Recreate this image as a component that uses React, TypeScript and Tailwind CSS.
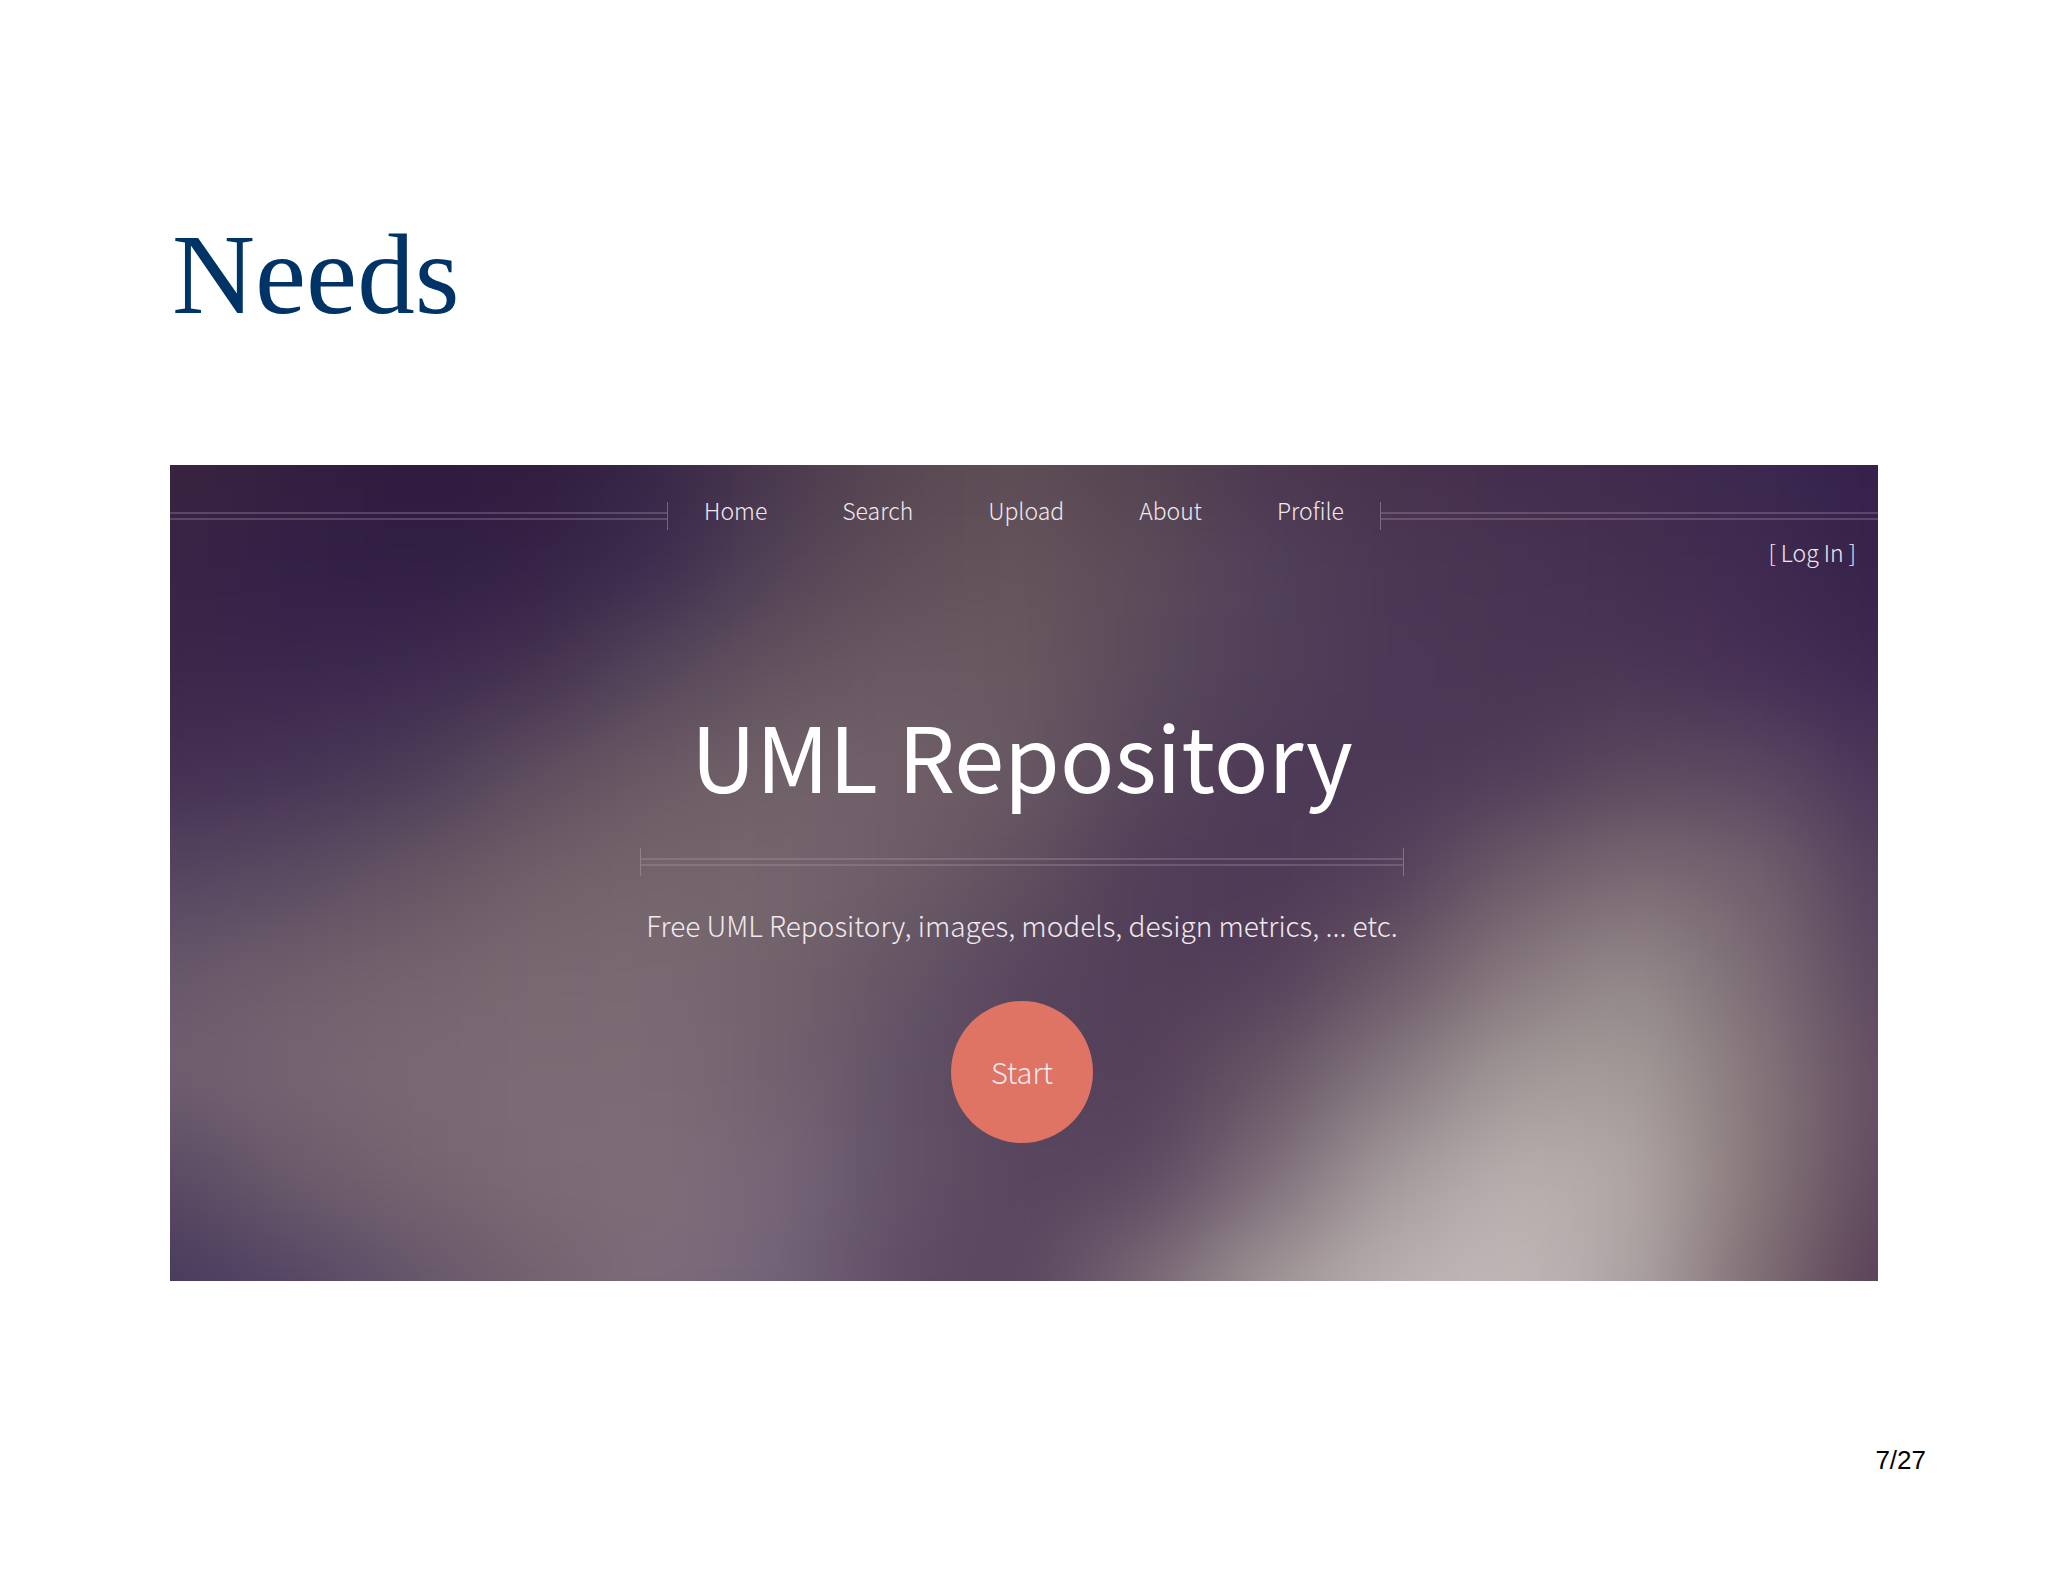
const NAV_ITEMS = ['Home', 'Search', 'Upload', 'About', 'Profile']

// Colour mesh for the hero backdrop, one row per horizontal band
const MESH = [
  ['#38243f', '#33203f', '#2d1a3e', '#301d3e', '#382647', '#4a394d', '#584852', '#5d4d56', '#544350', '#4b3850', '#47324c', '#432d4e', '#402b4c', '#3b2850', '#34204a'],
  ['#382445', '#342047', '#321e45', '#352246', '#3e2c50', '#534356', '#604f59', '#65545a', '#5c4b59', '#51405a', '#4b3754', '#483352', '#452f50', '#402a50', '#37224a'],
  ['#3b2749', '#3b274c', '#3d294f', '#443150', '#56465a', '#64545f', '#6a5a64', '#68585f', '#5a4a5c', '#513f58', '#4c3857', '#4a3553', '#4a3555', '#462f55', '#3e2852'],
  ['#443053', '#463355', '#4c3b57', '#5e4e5e', '#6b5b65', '#706169', '#705f69', '#685863', '#564559', '#4d3a57', '#4b3856', '#4f3c59', '#5a495d', '#5a4861', '#4a3559'],
  ['#55445f', '#5a4a61', '#655563', '#706069', '#74656b', '#75656d', '#6d5d67', '#60505e', '#503d58', '#4d3955', '#523f5a', '#6c5b68', '#7b6a73', '#73626e', '#54405c'],
  ['#67576a', '#6f5f6b', '#74646e', '#786870', '#796972', '#72626b', '#655565', '#57455f', '#523e57', '#543f5a', '#695765', '#87787e', '#958a8c', '#7c6d75', '#5b475f'],
  ['#6e5e6e', '#756573', '#796973', '#7b6b74', '#7b6b74', '#726270', '#625166', '#56445d', '#543f59', '#665564', '#857880', '#a39998', '#a59c99', '#86777b', '#634d61'],
  ['#5a4963', '#6b5b6a', '#756570', '#7b6b74', '#7f6e78', '#766677', '#635267', '#57455d', '#5b4860', '#7d6d79', '#a59b9c', '#b9afaf', '#b2a8a6', '#877779', '#5f4a5f'],
  ['#483a5d', '#554565', '#65556a', '#73636f', '#7c6b7a', '#736378', '#5e4c65', '#59465f', '#796975', '#a09596', '#bbb0b1', '#c2b8b8', '#aea3a4', '#7f6e74', '#583f55'],
]
const CELL_W = 122
const CELL_H = 102

// Cells are centred on their sample point, so one extra ring is repeated outside the frame
const clamp = (n: number, max: number) => Math.min(Math.max(n, 0), max)
const MESH_ROWS = Array.from({ length: MESH.length + 2 }, (_, i) => i - 1)
const MESH_COLS = Array.from({ length: MESH[0].length + 2 }, (_, i) => i - 1)

function Backdrop() {
  return (
    <svg
      className="absolute inset-0 h-full w-full"
      viewBox="0 0 1708 817"
      preserveAspectRatio="none"
      aria-hidden="true"
    >
      <defs>
        <filter
          id="soften"
          filterUnits="userSpaceOnUse"
          x="-183"
          y="-153"
          width="2074"
          height="1122"
          colorInterpolationFilters="sRGB"
        >
          <feGaussianBlur stdDeviation="50 42" />
        </filter>
      </defs>
      <g filter="url(#soften)" shapeRendering="crispEdges">
        {MESH_ROWS.map((r) =>
          MESH_COLS.map((c) => (
            <rect
              key={`${r}:${c}`}
              x={c * CELL_W - CELL_W / 2}
              y={r * CELL_H - CELL_H / 2}
              width={CELL_W}
              height={CELL_H}
              fill={MESH[clamp(r, MESH.length - 1)][clamp(c, MESH[0].length - 1)]}
            />
          )),
        )}
      </g>
    </svg>
  )
}

function Rail() {
  return <div className="h-2 flex-1 border-y-2 border-[#b49bb4]/30" />
}

function Tick() {
  return <div className="h-7 w-px bg-[#b49bb4]/50" />
}

export default function App() {
  return (
    <main className="min-h-screen bg-white px-[170px] pt-[211px] pb-[100px]">
      <h1 className="pl-0.5 font-['Liberation_Serif',serif] text-[115px] leading-[128px] text-[#003366]">Needs</h1>

      <section className="relative mt-[126px] overflow-hidden bg-[#4e3a56] pb-[138px] font-['Noto_Sans_CJK_SC',sans-serif] font-light text-[#f0e9ee]">
        <Backdrop />

        <div className="relative">
          <header className="flex items-center pt-[31px]">
            <Rail />
            <Tick />
            <nav className="flex gap-[75px] px-9 pb-3 text-[23px] leading-7">
              {NAV_ITEMS.map((item) => (
                <a key={item} href="#">
                  {item}
                </a>
              ))}
            </nav>
            <Tick />
            <Rail />
          </header>

          <div className="flex justify-end pr-[22px] text-[23px] leading-8">
            <a href="#">[ Log In ]</a>
          </div>

          <div className="mx-auto flex w-fit flex-col items-center pt-[120px] pr-1">
            <h2 className="text-[90px] leading-[132px] font-normal text-white">UML Repository</h2>
            <div className="mt-7 flex w-full items-center">
              <Tick />
              <Rail />
              <Tick />
            </div>
            <p className="mt-[29px] px-1.5 text-[28px] leading-10">
              Free UML Repository, images, models, design metrics, ... etc.
            </p>
            <button type="button" className="mt-14 size-[142px] rounded-full bg-[#df7364] text-[29px]">
              Start
            </button>
          </div>
        </div>
      </section>

      <footer className="-mr-12 pt-[163px] text-right font-['Liberation_Sans',sans-serif] text-[26px] leading-8 text-black">
        7/27
      </footer>
    </main>
  )
}
